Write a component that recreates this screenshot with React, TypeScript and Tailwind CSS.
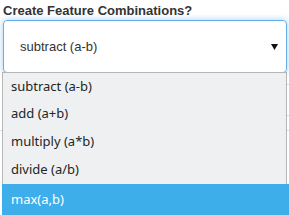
import { useState } from 'react';

const options = ['subtract (a-b)', 'add (a+b)', 'multiply (a*b)', 'divide (a/b)', 'max(a,b)'];

export default function App() {
  const [selected] = useState(0);
  const [hovered] = useState(4);

  return (
    <div className="relative w-[289px] h-[215px] overflow-hidden bg-white font-['Liberation_Sans',Arial,sans-serif]">
      <div className="px-[3px] pt-[3px]">
        <label className="block text-[13px] leading-[15px] font-bold text-[#333]">Create Feature Combinations?</label>
        <div className="mt-[2px] h-[53px] w-[284px] rounded-[4px] border border-[#66afe9] shadow-[0_0_6px_rgba(102,175,233,0.6)] flex items-center justify-between pl-[16px] pr-[8px]">
          <span className="text-[13px] text-[#333]">{options[selected]}</span>
          <svg width="7" height="6" viewBox="0 0 7 6">
            <polygon points="0,0 7,0 3.5,6" fill="#111" />
          </svg>
        </div>
      </div>

      {/* content under the open list */}
      <div className="mt-[11px] ml-[240px] border-t border-[#ddd]" />
      <div className="mt-[30px] ml-[240px] border-t border-[#ddd]" />
      <div className="mt-[14px] border-t border-[#ddd]" />

      <ul className="absolute left-[2px] top-[72px] w-[287px] font-['Noto_Sans',sans-serif] text-[13px]">
        {options.map((o, i) =>
          i === hovered ? (
            <li key={o} className="h-[31px] flex items-center pl-[9px] bg-[#3daee9] text-white">
              {o}
            </li>
          ) : (
            <li
              key={o}
              className={`w-[285px] h-[28px] flex items-center pl-[8px] bg-[#eff0f1] text-[#232627] border-x border-[#b4b6b8] ${i === 0 ? 'border-t' : ''}`}
            >
              {o}
            </li>
          )
        )}
      </ul>
    </div>
  );
}
